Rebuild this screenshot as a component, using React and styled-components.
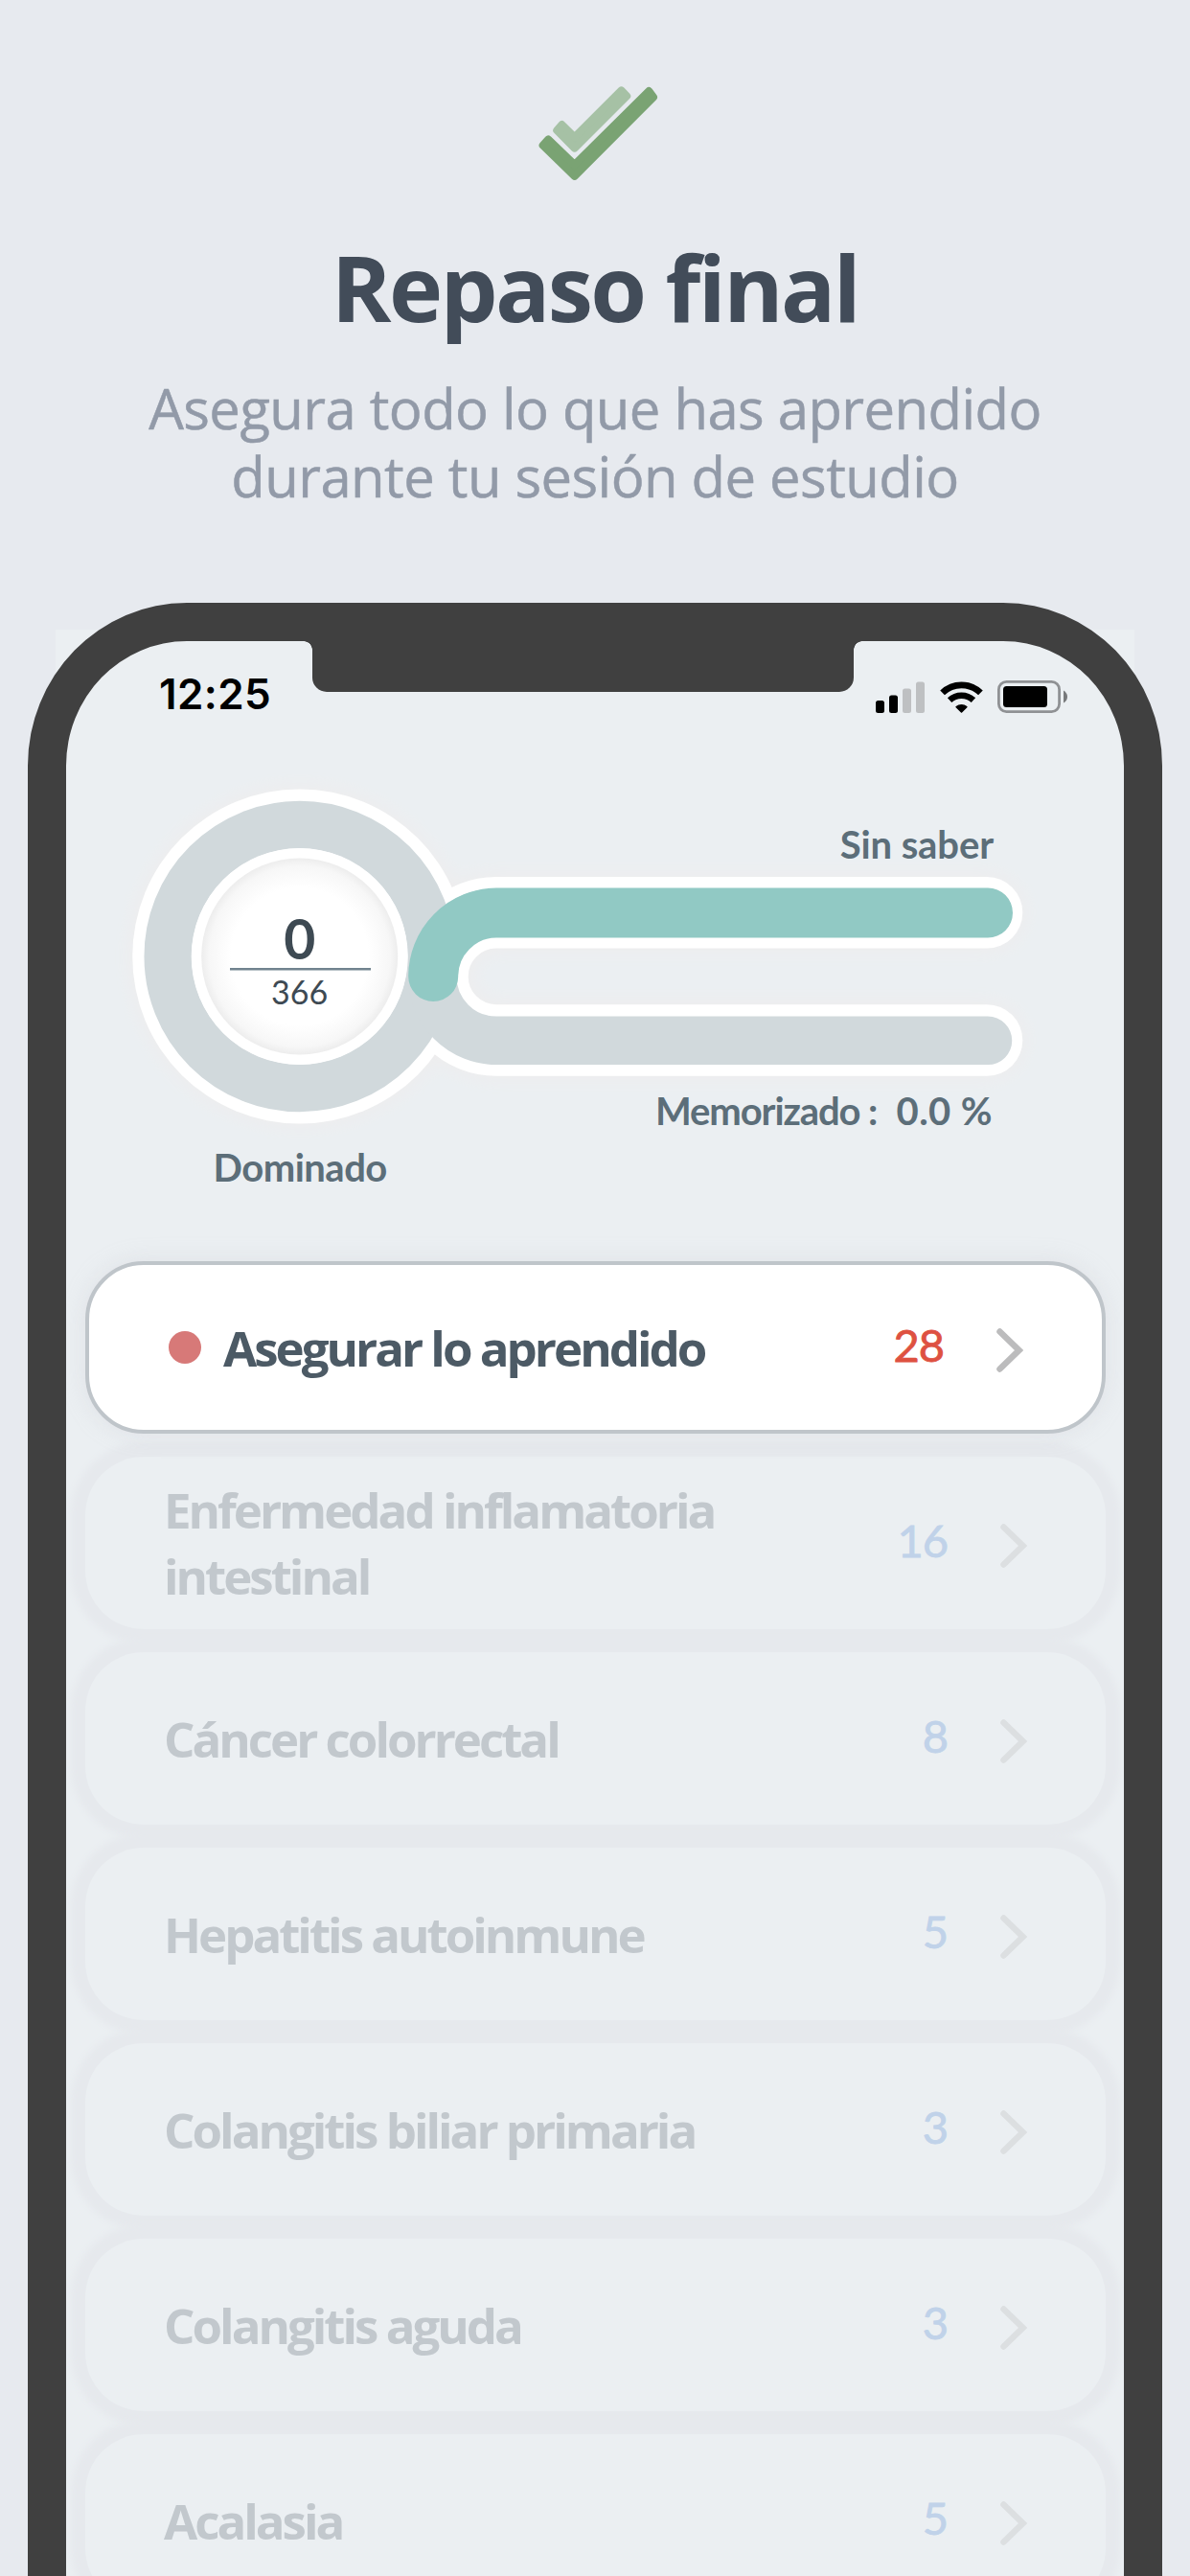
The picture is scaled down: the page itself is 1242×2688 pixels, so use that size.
import styled, { createGlobalStyle, css } from "styled-components";

const GlobalStyle = createGlobalStyle`
  * {
    box-sizing: border-box;
    margin: 0;
    padding: 0;
  }

  body {
    background-color: #e7eaef;
    font-family: "Open Sans", "Noto Sans", sans-serif;
  }
`;

const Pagina = styled.main`
  width: 1242px;
  height: 2688px;
  overflow: hidden;
  display: flex;
  flex-direction: column;
  align-items: center;
  background-color: #e7eaef;
`;

const Cabecera = styled.header`
  width: 100%;
  height: 629px;
  padding-top: 86px;
  flex-shrink: 0;
  display: flex;
  flex-direction: column;
  align-items: center;
  text-align: center;

  svg {
    display: block;
    margin-left: 12px;
  }
`;

const Titulo = styled.h1`
  margin-top: 54px;
  font-size: 95px;
  line-height: 110px;
  font-weight: 700;
  letter-spacing: -2.6px;
  color: #424c59;
`;

const Subtitulo = styled.p`
  margin-top: 36px;
  font-size: 58px;
  line-height: 71.3px;
  letter-spacing: -0.55px;
  color: #929aa8;
  -webkit-text-stroke: 0.5px #929aa8;
`;

const Telefono = styled.section`
  position: relative;
  z-index: 0;
  width: 1184px;
  flex-shrink: 0;

  &::before {
    content: "";
    position: absolute;
    z-index: -1;
    top: 28px;
    left: 29px;
    right: 29px;
    height: 300px;
    background-color: #ebeff2;
  }
`;

const Marco = styled.div`
  height: 2400px;
  border: 40px solid #404040;
  border-radius: 166px / 170px;
  background-color: #ebeff2;
  overflow: hidden;
`;

const BarraEstado = styled.div`
  position: relative;
  height: 110px;
  padding: 0 58px 0 97px;
  display: flex;
  align-items: center;
  justify-content: space-between;
`;

const Muesca = styled.div`
  position: absolute;
  top: -2px;
  left: 257px;
  width: 565px;
  height: 55px;
  border-radius: 0 0 15px 15px;
  background-color: #404040;

  &::before,
  &::after {
    content: "";
    position: absolute;
    top: 2px;
    width: 9px;
    height: 9px;
  }

  &::before {
    left: -9px;
    background: radial-gradient(circle at 0 100%, transparent 8.5px, #404040 9px);
  }

  &::after {
    right: -9px;
    background: radial-gradient(circle at 100% 100%, transparent 8.5px, #404040 9px);
  }
`;

const Hora = styled.span`
  font-family: Inter, "Liberation Sans", sans-serif;
  font-size: 44px;
  font-weight: 600;
  letter-spacing: 0.4px;
  color: #000;
`;

const Indicadores = styled.div`
  margin-top: 6px;
  display: flex;
  align-items: center;
  gap: 15.5px;

  svg {
    display: block;
  }
`;

const Progreso = styled.svg`
  display: block;
  width: 1104px;
  height: 517px;
`;

const Etiqueta = styled.text`
  font-family: Lato, "Open Sans", sans-serif;
  font-size: 40px;
  font-weight: 700;
  letter-spacing: ${({ $espacio }) => $espacio || "-0.5px"};
  fill: #5c6e79;
`;

const Cifra = styled.text`
  font-family: Lato, "Open Sans", sans-serif;
  font-size: ${({ $size }) => $size};
  font-weight: ${({ $peso }) => $peso};
  text-anchor: middle;
  fill: #3e4a53;
`;

const Lista = styled.ul`
  list-style: none;
  padding: 20px 19px 0 20px;
  display: flex;
  flex-direction: column;
  gap: 24px;
`;

const Tarjeta = styled.li`
  height: 180px;
  padding: 0 82px 0 82px;
  display: flex;
  align-items: center;
  border-radius: 61px;
  background-color: #ebeff2;
  box-shadow: 0 0 7px 15px #e6e9ed;

  ${({ $activa }) => $activa && css`
    position: relative;
    padding: 0 82px 0 83px;
    border: 4px solid #bfc5ca;
    background-color: #fff;
    box-shadow: 0 0 24px rgba(190, 190, 196, 0.26);
  `}
`;

const Punto = styled.span`
  width: 34px;
  height: 34px;
  margin-right: 23px;
  border-radius: 50%;
  background-color: #d77978;
`;

const Nombre = styled.h2`
  flex: 1;
  max-width: 640px;
  margin-right: auto;
  font-size: 51px;
  line-height: 69px;
  font-weight: 700;
  letter-spacing: -3px;
  color: ${({ $activa }) => ($activa ? "#4c5a65" : "#c2c8cd")};
`;

const Cantidad = styled.span`
  margin: 0 2px 6px 0;
  font-family: Lato, "Open Sans", sans-serif;
  font-size: 47px;
  letter-spacing: -1px;
  color: ${({ $activa }) => ($activa ? "#de5141" : "#c0d2e9")};
  -webkit-text-stroke: 0.8px currentColor;
`;

const Flecha = styled.svg`
  width: 28px;
  height: 46px;
  margin: 6px 0 0 53px;
  fill: none;
  stroke: ${({ $activa }) => ($activa ? "#bcbcbd" : "#dcdfe1")};
  stroke-width: 6.5;
  stroke-linecap: round;
`;

const temas = [
  { nombre: "Asegurar lo aprendido", cantidad: 28, activa: true },
  { nombre: "Enfermedad inflamatoria intestinal", cantidad: 16 },
  { nombre: "Cáncer colorrectal", cantidad: 8 },
  { nombre: "Hepatitis autoinmune", cantidad: 5 },
  { nombre: "Colangitis biliar primaria", cantidad: 3 },
  { nombre: "Colangitis aguda", cantidad: 3 },
  { nombre: "Acalasia", cantidad: 5 },
];

const DobleCheck = () => (
  <svg width="132" height="104" viewBox="561 86 132 104" strokeWidth="8" strokeLinejoin="round">
    <path
      d="M581.2 136L586.4 130L599.7 143.2L648.5 94.4L654.2 100.2L599.7 154.6Z"
      fill="#a6c1a5"
      stroke="#a6c1a5"
    />
    <path
      d="M566.6 151.6L572.2 145.4L599.7 171.9L677.2 95L682 101.4L599.7 183.8Z"
      fill="#7aa373"
      stroke="#7aa373"
    />
  </svg>
);

const Senal = () => (
  <svg width="51" height="33" viewBox="0 0 51 33">
    <rect x="0" y="20" width="9" height="13" rx="2.5" />
    <rect x="14" y="14.5" width="9" height="18.5" rx="2.5" />
    <rect x="28" y="7.5" width="9" height="25.5" rx="2.5" fill="#bec0c2" />
    <rect x="42" y="0.5" width="9" height="32.5" rx="2.5" fill="#bec0c2" />
  </svg>
);

const Wifi = () => (
  <svg width="45" height="33" viewBox="0 0 45 33" fill="none" stroke="#000">
    <path d="M2.6 11.9A28.7 28.7 0 0 1 42.4 11.9" strokeWidth="6.8" />
    <path d="M10.1 19.6A18.2 18.2 0 0 1 34.9 19.6" strokeWidth="6.4" />
    <path d="M22.5 32L17.2 26.6A8.5 8.5 0 0 1 27.8 26.6Z" fill="#000" strokeWidth="1.6" strokeLinejoin="round" />
  </svg>
);

const Bateria = () => (
  <svg width="74" height="34" viewBox="0 0 74 34">
    <rect x="1.4" y="1.4" width="63.2" height="31.2" rx="8" fill="none" stroke="#8f9194" strokeWidth="2.8" />
    <rect x="6" y="6" width="46" height="22" rx="3.5" />
    <path d="M69 10.5Q73 13 73 17Q73 21 69 23.5Z" fill="#77797b" />
  </svg>
);

const GraficoProgreso = () => (
  <Progreso viewBox="0 0 1104 517">
    <defs>
      <radialGradient id="esfera">
        <stop offset="70%" stopColor="#fff" />
        <stop offset="92%" stopColor="#f7f7f7" />
        <stop offset="100%" stopColor="#ededed" />
      </radialGradient>
      <filter id="halo" x="-10%" y="-15%" width="120%" height="130%">
        <feDropShadow dx="0" dy="0" stdDeviation="11" floodColor="#f1ebea" floodOpacity="0.7" />
      </filter>
    </defs>

    {/* contorno blanco */}
    <g filter="url(#halo)">
      <circle cx="243.7" cy="219" r="174.5" fill="#fff" />
      <path
        d="M961 173.3H449A66.5 66.5 0 0 0 449 306.5H961"
        fill="none"
        stroke="#fff"
        strokeWidth="74.6"
        strokeLinecap="round"
      />
    </g>

    {/* recorrido gris */}
    <circle cx="243.7" cy="219" r="137.5" fill="none" stroke="#d1d9dc" strokeWidth="49.5" />
    <path
      d="M449 173.3A66.5 66.5 0 0 0 449 306.8H962"
      fill="none"
      stroke="#d1d9dc"
      strokeWidth="50.5"
      strokeLinecap="round"
    />

    <path
      d="M962 173.5H449A66.3 66.3 0 0 0 383.2 240"
      fill="none"
      stroke="#91c9c4"
      strokeWidth="52"
      strokeLinecap="round"
    />

    <circle cx="243.7" cy="219" r="113" fill="#fff" />
    <circle cx="243.7" cy="219" r="102.5" fill="url(#esfera)" />
    <Cifra x="243.7" y="222" $size="57px" $peso="700">0</Cifra>
    <path d="M171 232.3H318" stroke="#71838f" strokeWidth="2.6" />
    <Cifra x="243.7" y="269" $size="34px" $peso="400">366</Cifra>

    <Etiqueta x="153.5" y="454">Dominado</Etiqueta>
    <Etiqueta x="968" y="117" textAnchor="end" $espacio="-0.1px">Sin saber</Etiqueta>
    <Etiqueta x="615" y="395" $espacio="-1.1px">Memorizado :</Etiqueta>
    <Etiqueta x="967" y="395" textAnchor="end" $espacio="0.4px">0.0 %</Etiqueta>
  </Progreso>
);

const Tema = ({ nombre, cantidad, activa }) => (
  <Tarjeta $activa={activa}>
    {activa && <Punto />}
    <Nombre $activa={activa}>{nombre}</Nombre>
    <Cantidad $activa={activa}>{cantidad}</Cantidad>
    <Flecha $activa={activa} viewBox="0 0 28 46">
      <path d="M3.5 3.5L23.5 23L3.5 42.5" />
    </Flecha>
  </Tarjeta>
);

const App = () => {
  return (
    <>
      <GlobalStyle />
      <Pagina>
        <Cabecera>
          <DobleCheck />
          <Titulo>Repaso final</Titulo>
          <Subtitulo>
            Asegura todo lo que has aprendido
            <br />
            durante tu sesión de estudio
          </Subtitulo>
        </Cabecera>
        <Telefono>
          <Marco>
            <BarraEstado>
              <Muesca />
              <Hora>12:25</Hora>
              <Indicadores>
                <Senal />
                <Wifi />
                <Bateria />
              </Indicadores>
            </BarraEstado>
            <GraficoProgreso />
            <Lista>
              {temas.map((tema) => (
                <Tema key={tema.nombre} {...tema} />
              ))}
            </Lista>
          </Marco>
        </Telefono>
      </Pagina>
    </>
  );
};

export default App;
